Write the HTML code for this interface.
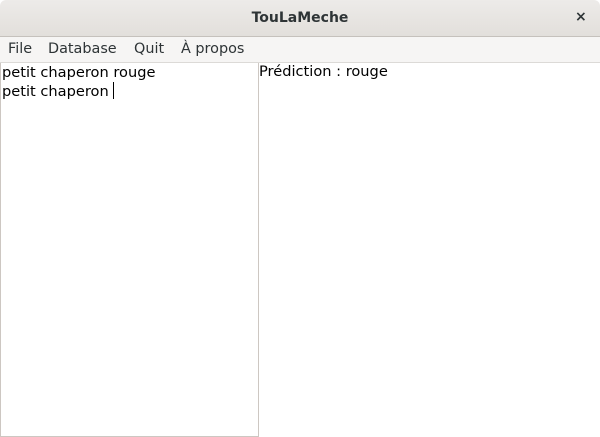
<!DOCTYPE html>
<html><head><style>
body{margin:0;width:600px;height:437px;overflow:hidden;font-family:"DejaVu Sans",sans-serif;background:#fff;position:relative}
.t{position:absolute;left:0;top:0;width:600px;height:36px;background:linear-gradient(#edebe9,#e2dfdb);border-bottom:1px solid #c5c1bc;border-radius:6px 6px 0 0}
.t b{position:absolute;left:0;right:0;top:10px;text-align:center;font-size:14px;color:#2e3436}
.x{position:absolute;left:575px;top:9px;font-size:14px;font-weight:bold;color:#2e3436}
.m{position:absolute;top:37px;left:0;width:600px;height:25px;background:#f6f5f4;border-bottom:1px solid #dcdad7;font-size:14.4px;color:#2e3436}
.m span{position:absolute;top:4px}
.ta{position:absolute;left:0;top:63px;width:257px;height:373px;border:1px solid #cdc7c2;border-top:none;font-size:14.6px;color:#000;line-height:19px}
.p{position:absolute;left:259px;top:63px;font-size:14.6px}
.c{display:inline-block;width:1px;height:17px;background:#000;vertical-align:-3px;margin-left:4px}
</style></head><body>
<div class="t"><b>TouLaMeche</b><span class="x">×</span></div>
<div class="m"><span style="left:8px">File</span><span style="left:48px">Database</span><span style="left:134px">Quit</span><span style="left:181px">À propos</span></div>
<div class="ta"><div style="padding-left:1px;padding-top:0px">petit chaperon rouge<br>petit chaperon<span class="c"></span></div></div>
<div class="p">Prédiction : rouge</div>
</body></html>
